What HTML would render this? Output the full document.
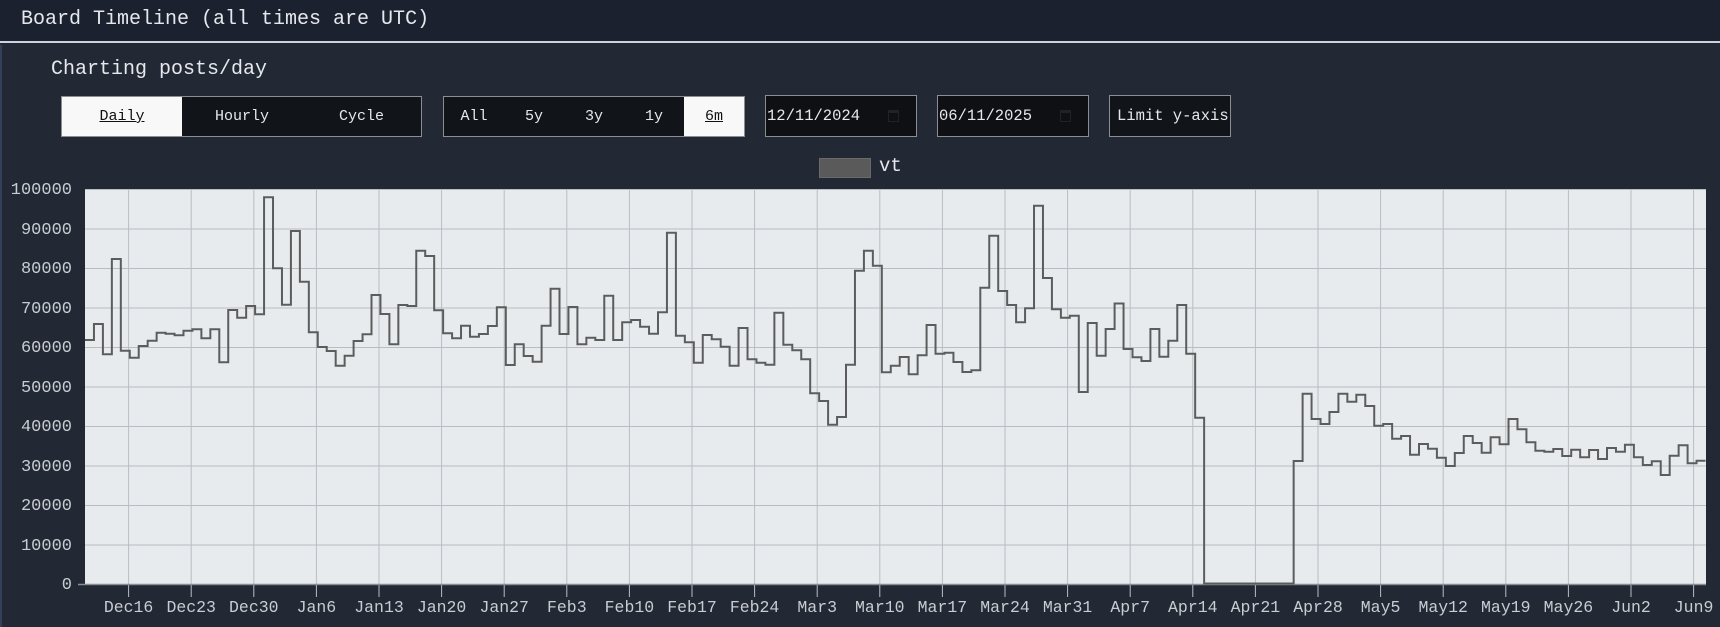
<!DOCTYPE html>
<html><head><meta charset="utf-8"><style>
*{box-sizing:border-box;margin:0;padding:0}
body{width:1720px;height:627px;background:#222834;font-family:"Liberation Mono",monospace;color:#e6e8ec;position:relative;overflow:hidden}
.hdr{position:absolute;left:0;top:0;width:1720px;height:43px;background:#1c2130;border-bottom:2px solid #cfd3dc}
.hdr span{position:absolute;left:21px;top:8px;font-size:20px}
.lb{position:absolute;left:0;top:45px;width:2px;height:582px;background:#34405a}
.t{position:absolute;white-space:nowrap}
.grp{position:absolute;top:96px;height:41px;border:1px solid #8a8d92;background:#111418;display:flex}
.grp div{height:39px;line-height:39px;text-align:center;font-size:15px;color:#e6e8ec}
.grp .on{background:#f8f8f9;color:#111;text-decoration:underline}
.inp{position:absolute;top:95px;height:42px;border:1px solid #8a8d92;background:#0e1013;font-size:15.5px;line-height:40px;padding-left:1px;color:#e6e8ec}
.cal{position:absolute;right:17px;top:14px;width:11px;height:12px;border:1.5px solid #1f2226;border-top-width:3px}
</style></head><body>
<div class="hdr"><span>Board Timeline (all times are UTC)</span></div>
<div class="lb"></div>
<div class="t" style="left:51px;top:58px;font-size:20px">Charting posts/day</div>
<div class="grp" style="left:61px;width:361px"><div class="on" style="width:120px">Daily</div><div style="width:120px">Hourly</div><div style="width:119px">Cycle</div></div>
<div class="grp" style="left:443px;width:302px"><div style="width:60px">All</div><div style="width:60px">5y</div><div style="width:60px">3y</div><div style="width:60px">1y</div><div class="on" style="width:60px">6m</div></div>
<div class="inp" style="left:765px;width:152px">12/11/2024<div class="cal"></div></div>
<div class="inp" style="left:937px;width:152px">06/11/2025<div class="cal"></div></div>
<div class="inp" style="left:1109px;width:122px;padding-left:7px;background:#111418">Limit y-axis</div>
<div style="position:absolute;left:819px;top:158px;width:52px;height:20px;background:#5a5a5a;border:1px solid #6a6a6a"></div>
<div class="t" style="left:879px;top:155px;font-size:19px">vt</div>
<svg width="1720" height="627" style="position:absolute;left:0;top:0" font-family="Liberation Mono, monospace">
<rect x="85" y="189" width="1621" height="395" fill="#e8ebee"/>
<g stroke="#b9bdc2" stroke-width="1">
<path d="M85 189.5H1706M85 229H1706M85 268.5H1706M85 308H1706M85 347.5H1706M85 387H1706M85 426.5H1706M85 466H1706M85 505.5H1706M85 545H1706"/>
<path d="M128.6 189V597M191.2 189V597M253.8 189V597M316.4 189V597M379 189V597M441.6 189V597M504.2 189V597M566.8 189V597M629.4 189V597M692 189V597M754.6 189V597M817.2 189V597M879.8 189V597M942.4 189V597M1005 189V597M1067.6 189V597M1130.2 189V597M1192.8 189V597M1255.4 189V597M1318 189V597M1380.6 189V597M1443.2 189V597M1505.8 189V597M1568.4 189V597M1631 189V597M1693.6 189V597"/>
</g>
<path d="M78 584.5H1706" stroke="#8a8d92" stroke-width="1.5"/>
<g fill="#c9ccd1" font-size="17" text-anchor="end">
<text x="72" y="194">100000</text><text x="72" y="234">90000</text><text x="72" y="273">80000</text><text x="72" y="313">70000</text><text x="72" y="352">60000</text><text x="72" y="392">50000</text><text x="72" y="431">40000</text><text x="72" y="471">30000</text><text x="72" y="510">20000</text><text x="72" y="550">10000</text><text x="72" y="589">0</text>
</g>
<g fill="#c9ccd1" font-size="16.5" text-anchor="middle">
<text x="128.6" y="612">Dec16</text><text x="191.2" y="612">Dec23</text><text x="253.8" y="612">Dec30</text><text x="316.4" y="612">Jan6</text><text x="379" y="612">Jan13</text><text x="441.6" y="612">Jan20</text><text x="504.2" y="612">Jan27</text><text x="566.8" y="612">Feb3</text><text x="629.4" y="612">Feb10</text><text x="692" y="612">Feb17</text><text x="754.6" y="612">Feb24</text><text x="817.2" y="612">Mar3</text><text x="879.8" y="612">Mar10</text><text x="942.4" y="612">Mar17</text><text x="1005" y="612">Mar24</text><text x="1067.6" y="612">Mar31</text><text x="1130.2" y="612">Apr7</text><text x="1192.8" y="612">Apr14</text><text x="1255.4" y="612">Apr21</text><text x="1318" y="612">Apr28</text><text x="1380.6" y="612">May5</text><text x="1443.2" y="612">May12</text><text x="1505.8" y="612">May19</text><text x="1568.4" y="612">May26</text><text x="1631" y="612">Jun2</text><text x="1693.6" y="612">Jun9</text>
</g>
<g transform="translate(85,0) scale(8.953,1)">
<path fill="none" stroke="#5c5c5c" stroke-width="2" vector-effect="non-scaling-stroke" d="M0 340H1V324H2V354.3H3V259H4V350.7H5V357.7H6V346H7V340.7H8V332.7H9V333.7H10V335.3H11V330.7H12V329.3H13V338.3H14V329.3H15V362.3H16V310H17V317.7H18V306H19V314.3H20V197.3H21V268.3H22V304.7H23V231H24V281.7H25V332.3H26V347H27V351H28V365.7H29V355.7H30V341H31V334.3H32V295H33V314H34V344.3H35V305H36V306H37V250.7H38V256H39V310.3H40V333.3H41V338.3H42V325.7H43V336.7H44V334H45V326H46V307.3H47V365H48V344.3H49V356H50V361.7H51V325.7H52V288.7H53V334H54V307H55V344.3H56V337.7H57V340H58V295.7H59V340H60V322.3H61V320H62V326.7H63V333.7H64V312.3H65V232.7H66V335.7H67V342.3H68V362.7H69V335H70V339.3H71V346.7H72V365.7H73V328H74V359.3H75V362.7H76V364.7H77V312.7H78V344.7H79V350.3H80V359.3H81V393.3H82V401H83V424.8H84V417H85V364.7H86V270.7H87V250.7H88V265.7H89V372.3H90V365.7H91V357H92V374.3H93V355.3H94V325H95V353.7H96V352.7H97V362H98V372H99V370.3H100V287.7H101V235.7H102V291H103V305H104V322.3H105V308.3H106V205.7H107V278H108V309.3H109V317.7H110V315.7H111V392H112V323H113V355.7H114V329H115V303.5H116V349H117V357.3H118V361H119V329H120V356.7H121V340.7H122V305H123V353.7H124V417.7H125V583.5H135V461H136V393.7H137V419H138V424H139V412H140V393.7H141V401.7H142V394.7H143V406H144V425.7H145V424H146V438.7H147V436H148V454.7H149V444H150V448.7H151V457.7H152V466H153V453H154V436H155V443H156V452.7H157V437.3H158V444.3H159V419H160V429.3H161V442.3H162V450.7H163V451.7H164V449H165V456H166V449.7H167V457.3H168V450H169V459H170V448H171V451.7H172V444.7H173V457.3H174V465H175V461.3H176V475H177V455.7H178V445.3H179V463.3H180V460.7H181"/>
</g>
</svg>
</body></html>
